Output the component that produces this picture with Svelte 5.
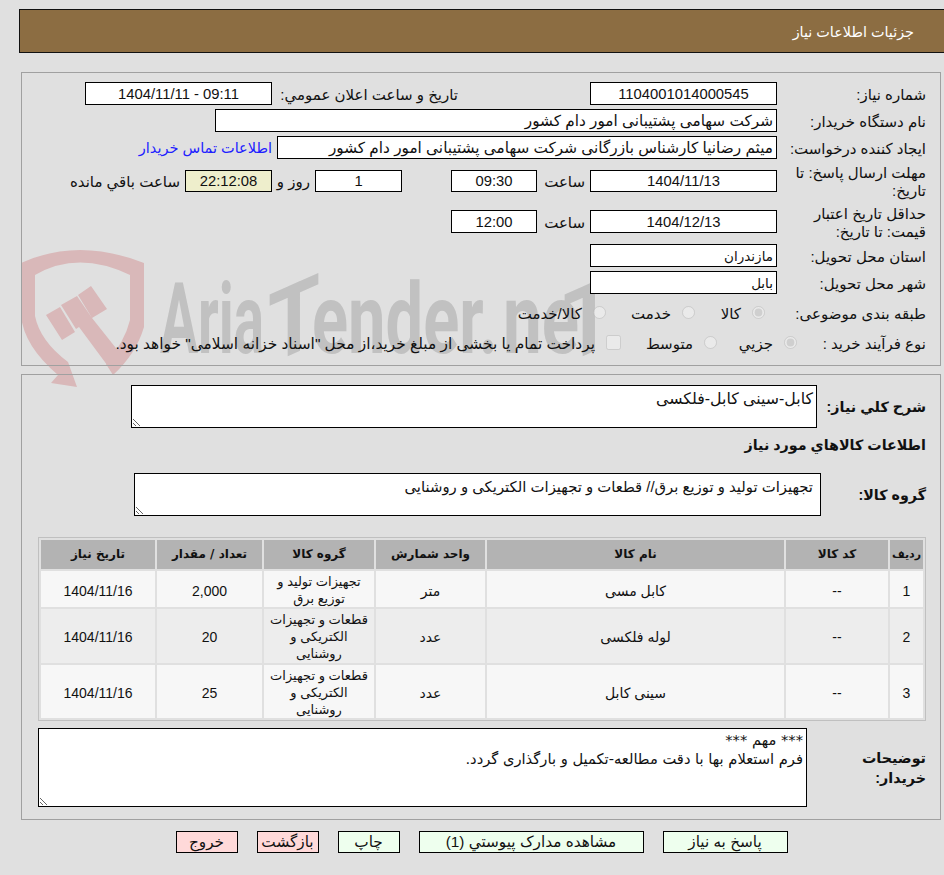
<script>
	const items = [
		{ id: 1, code: '--', name: 'کابل مسی', unit: 'متر', group: 'تجهیزات تولید و توزیع برق', qty: '2,000', date: '1404/11/16' },
		{ id: 2, code: '--', name: 'لوله فلکسی', unit: 'عدد', group: 'قطعات و تجهیزات الکتریکی و روشنایی', qty: '20', date: '1404/11/16' },
		{ id: 3, code: '--', name: 'سینی کابل', unit: 'عدد', group: 'قطعات و تجهیزات الکتریکی و روشنایی', qty: '25', date: '1404/11/16' }
	];
</script>

<div class="page" dir="rtl">
	<svg class="watermark" dir="ltr" width="640" height="150" viewBox="0 0 640 150" aria-hidden="true">
		<path d="M21 17 Q78 -9 144 17 V81 Q136 108 113 129 L106 118 Q125 95 130 74 V29 Q78 4 35 29 V70 Q40 95 68 116 L77 141 L51 137 L58 129 Q24 100 21 70 Z" fill="#d9b8b9" />
		<path d="M46 69 L60 61 L75 86 L62 94 Z M61 59 L77 50 L92 72 L123 111 L113 127 L79 81 L76 83 Z M78 49 L91 40 L107 63 L92 72 Z" fill="#d9b8b9" />
		<text class="wm" x="160" y="107" textLength="104" lengthAdjust="spacingAndGlyphs">Aria</text>
		<text class="wm" transform="translate(268 119) skewY(-24)" textLength="52" lengthAdjust="spacingAndGlyphs">T</text>
		<text class="wm" x="312" y="107" textLength="186" lengthAdjust="spacingAndGlyphs">ender.</text>
		<text class="wm" x="503" y="107" textLength="76" lengthAdjust="spacingAndGlyphs">ne</text>
		<text class="wm" transform="translate(563 119) skewY(-24)" textLength="52" lengthAdjust="spacingAndGlyphs">T</text>
	</svg>

	<header class="title">جزئیات اطلاعات نیاز</header>

	<section class="box info">
		<div class="row r23">
			<span class="lbl">شماره نیاز:</span>
			<input class="f w187 c" readonly value="1104001014000545" dir="ltr" />
			<span class="txt t1">تاریخ و ساعت اعلان عمومي:</span>
			<input class="f w187 c" readonly value="1404/11/11 - 09:11" dir="ltr" />
		</div>
		<div class="row r23">
			<span class="lbl">نام دستگاه خریدار:</span>
			<input class="f w562" readonly value="شرکت سهامی پشتیبانی امور دام کشور" />
		</div>
		<div class="row r23">
			<span class="lbl">ایجاد کننده درخواست:</span>
			<input class="f w500" readonly value="میثم رضانیا کارشناس بازرگانی شرکت سهامی پشتیبانی امور دام کشور" />
			<span class="link">اطلاعات تماس خریدار</span>
		</div>
		<div class="row r36">
			<span class="lbl">مهلت ارسال پاسخ: تا تاریخ:</span>
			<input class="f w187 c h22" readonly value="1404/11/13" dir="ltr" />
			<span class="txt t2">ساعت</span>
			<input class="f w86 c h22" readonly value="09:30" dir="ltr" />
			<input class="f w87 c h22 gap49" readonly value="1" dir="ltr" />
			<span class="txt t3">روز و</span>
			<input class="f w87 c h22 clock" readonly value="22:12:08" dir="ltr" />
			<span class="txt t4">ساعت باقي مانده</span>
		</div>
		<div class="row r37">
			<span class="lbl">حداقل تاریخ اعتبار قیمت: تا تاریخ:</span>
			<input class="f w187 c" readonly value="1404/12/13" dir="ltr" />
			<span class="txt t2">ساعت</span>
			<input class="f w86 c" readonly value="12:00" dir="ltr" />
		</div>
		<div class="row r23">
			<span class="lbl">استان محل تحویل:</span>
			<input class="f w187 place" readonly value="مازندران" />
		</div>
		<div class="row r23">
			<span class="lbl">شهر محل تحویل:</span>
			<input class="f w187 place" readonly value="بابل" />
		</div>
		<div class="row r30">
			<span class="lbl">طبقه بندی موضوعی:</span>
			<label class="opt o1"><input type="radio" name="cat" checked disabled />کالا</label>
			<label class="opt o2"><input type="radio" name="cat" disabled />خدمت</label>
			<label class="opt"><input type="radio" name="cat" disabled />کالا/خدمت</label>
		</div>
		<div class="row r22">
			<span class="lbl short">نوع فرآیند خرید :</span>
			<label class="opt o3"><input type="radio" name="proc" checked disabled />جزیي</label>
			<label class="opt o4"><input type="radio" name="proc" disabled />متوسط</label>
			<label class="opt o5"><input type="checkbox" disabled />پرداخت تمام یا بخشی از مبلغ خرید،از محل "اسناد خزانه اسلامی" خواهد بود.</label>
		</div>
	</section>

	<section class="box detail">
		<div class="line l1">
			<b class="lbl-b">شرح کلي نیاز:</b>
			<textarea class="ta ta1" readonly>کابل-سینی کابل-فلکسی</textarea>
		</div>
		<h3>اطلاعات کالاهاي مورد نیاز</h3>
		<div class="line l2">
			<b class="lbl-b">گروه کالا:</b>
			<textarea class="ta ta2" readonly>تجهیزات تولید و توزیع برق// قطعات و تجهیزات الکتریکی و روشنایی</textarea>
		</div>

		<table>
			<colgroup>
				<col style="width:33px" /><col style="width:102px" /><col style="width:297px" /><col style="width:109px" /><col style="width:110px" /><col style="width:105px" /><col style="width:114px" />
			</colgroup>
			<thead>
				<tr>
					<th class="idx">ردیف</th><th>کد کالا</th><th>نام کالا</th><th>واحد شمارش</th><th>گروه کالا</th><th>تعداد / مقدار</th><th>تاریخ نیاز</th>
				</tr>
			</thead>
			<tbody>
				{#each items as item}
					<tr>
						<td>{item.id}</td>
						<td>{item.code}</td>
						<td>{item.name}</td>
						<td>{item.unit}</td>
						<td class="grp">{item.group}</td>
						<td>{item.qty}</td>
						<td>{item.date}</td>
					</tr>
				{/each}
			</tbody>
		</table>

		<div class="line l3">
			<b class="lbl-b narrow">توضیحات خریدار:</b>
			<textarea class="ta ta3" readonly>*** مهم ***
فرم استعلام بها با دقت مطالعه-تکمیل و بارگذاری گردد.</textarea>
		</div>
	</section>

	<div class="actions">
		<button class="ok b125">پاسخ به نیاز</button>
		<button class="ok b225">مشاهده مدارک پیوستي (1)</button>
		<button class="ok b62">چاپ</button>
		<button class="no b62">بازگشت</button>
		<button class="no b62">خروج</button>
	</div>
</div>

<style>
	:global(body) {
		background: #e0e0e0;
	}

	.page {
		position: relative;
		height: 875px;
		padding-top: 9px;
		box-sizing: border-box;
		overflow: hidden;
		font-family: 'Liberation Sans', 'DejaVu Sans', sans-serif;
		font-size: 15px;
		color: #111;
	}

	.watermark {
		position: absolute;
		left: 0;
		top: 246px;
		direction: ltr;
		overflow: visible;
	}

	.wm {
		font-family: 'Roboto', sans-serif;
		font-size: 98px;
		font-weight: 700;
		fill: #c1c1c1;
	}

	.title {
		position: relative;
		height: 42px;
		line-height: 44px;
		margin-left: 19px;
		padding-right: 30px;
		background: #8c6d42;
		border: 1px solid #111;
		border-right: 0;
		font-size: 14.4px;
		color: #fff;
	}

	.box {
		position: relative;
		margin: 0 3px 0 21px;
		border: 1px solid #a0a0a0;
		box-sizing: border-box;
	}

	.info {
		margin-top: 19px;
		height: 294px;
		padding: 9px 14px 0 0;
		display: flex;
		flex-direction: column;
		gap: 4px;
	}

	.row {
		display: flex;
		align-items: center;
	}

	.r22 { height: 22px; }
	.r23 { height: 23px; }
	.r30 { height: 30px; }
	.r36 { height: 36px; }
	.r37 { height: 37px; }

	.lbl {
		width: 149px;
		flex: none;
		padding-top: 2px;
		box-sizing: border-box;
		line-height: 18px;
	}

	.lbl.short {
		width: 129px;
	}

	.f {
		box-sizing: border-box;
		height: 23px;
		padding: 0 3px;
		border: 1px solid #000;
		border-radius: 0;
		outline: 0;
		background: #fff;
		font: inherit;
		font-size: 15.3px;
		color: #111;
		flex: none;
		direction: rtl;
	}

	.h22 { height: 22px; }
	.c { text-align: center; direction: ltr; font-size: 14.8px; }
	.place { font-size: 13.5px; }
	.w187 { width: 187px; }
	.w562 { width: 562px; }
	.w500 { width: 500px; }
	.w86 { width: 86px; }
	.w87 { width: 87px; }
	.gap49 { margin-right: 49px; }
	.clock { background: #eeeecc; }

	.txt { flex: none; padding-top: 2px; }
	.t1 { width: 186px; margin-right: 132px; }
	.t2 { width: 53px; padding-right: 5px; box-sizing: border-box; }
	.t3 { width: 43px; padding-right: 5px; box-sizing: border-box; }
	.t4 { padding-right: 5px; }

	.link {
		margin-right: 5px;
		font-size: 14.5px;
		color: #2020ff;
	}

	.opt {
		display: flex;
		align-items: center;
		gap: 11px;
		flex: none;
		padding-top: 2px;
		white-space: nowrap;
	}

	.opt input {
		margin: 0;
		flex: none;
		position: relative;
		top: -2px;
		opacity: 0.75;
	}

	.o1 { width: 70px; margin-right: 12px; }
	.o2 { width: 89px; }
	.o3 { width: 80px; }
	.o4 { width: 96px; }

	.o5 {
		font-size: 15.4px;
	}

	.o5 input {
		width: 15px;
		height: 15px;
	}

	.detail {
		margin-top: 8px;
		height: 446px;
		padding: 10px 14px 0 0;
	}

	.line {
		display: flex;
		align-items: center;
	}

	.lbl-b {
		flex: none;
		width: 109px;
		font-size: 14.3px;
	}

	.lbl-b.narrow {
		width: 119px;
		padding-left: 40px;
		box-sizing: border-box;
		line-height: 20px;
	}

	h3 {
		margin: 6px 0 0;
		height: 22px;
		line-height: 22px;
		font-size: 14.3px;
		font-weight: 700;
	}

	.l2 { margin-top: 17px; }
	.l2 .lbl-b { width: 105px; }
	.l3 { margin-top: 7px; }

	.ta {
		display: block;
		box-sizing: border-box;
		margin: 0;
		padding: 3px 3px 0;
		border: 1px solid #000;
		border-radius: 0;
		outline: 0;
		background: #fff;
		font: inherit;
		color: #111;
		flex: none;
	}

	.ta1 { width: 686px; height: 43px; font-size: 15.8px; }
	.ta2 { width: 687px; height: 43px; padding: 4px 7px 0 3px; font-size: 14.85px; }
	.ta3 {
		width: 769px;
		height: 79px;
		padding-top: 1px;
		font-family: 'DejaVu Sans', sans-serif;
		font-size: 14.7px;
		line-height: 19px;
		overflow: hidden;
	}

	table {
		width: 888px;
		height: 184px;
		margin-top: 21px;
		box-sizing: border-box;
		table-layout: fixed;
		border-collapse: separate;
		border-spacing: 2px;
		border: 1px solid #c0c0c0;
		text-align: center;
		line-height: 17px;
	}

	th {
		height: 29px;
		padding: 0;
		background: #b3b3b3;
		font-size: 12px;
		font-weight: 700;
		font-family: 'DejaVu Sans', sans-serif;
	}

	th.idx {
		font-size: 11px;
	}

	td {
		padding: 4px 0 0;
		font-size: 14px;
	}

	tbody tr:nth-child(odd) td { background: #f7f7f7; }
	tbody tr:nth-child(even) td { background: #ededed; }

	td.grp {
		padding: 2px 3px 0;
		font-size: 13px;
	}

	.actions {
		display: flex;
		justify-content: center;
		gap: 19px;
		margin: 11px 0 0 19px;
	}

	button {
		height: 22px;
		padding: 0;
		border: 1px solid #000;
		border-radius: 0;
		font: inherit;
		font-size: 15.3px;
		color: #111;
	}

	.ok { background: #eeffee; }
	.no { background: #ffd9d9; }
	.b125 { width: 125px; }
	.b225 { width: 225px; }
	.b62 { width: 62px; }
</style>
